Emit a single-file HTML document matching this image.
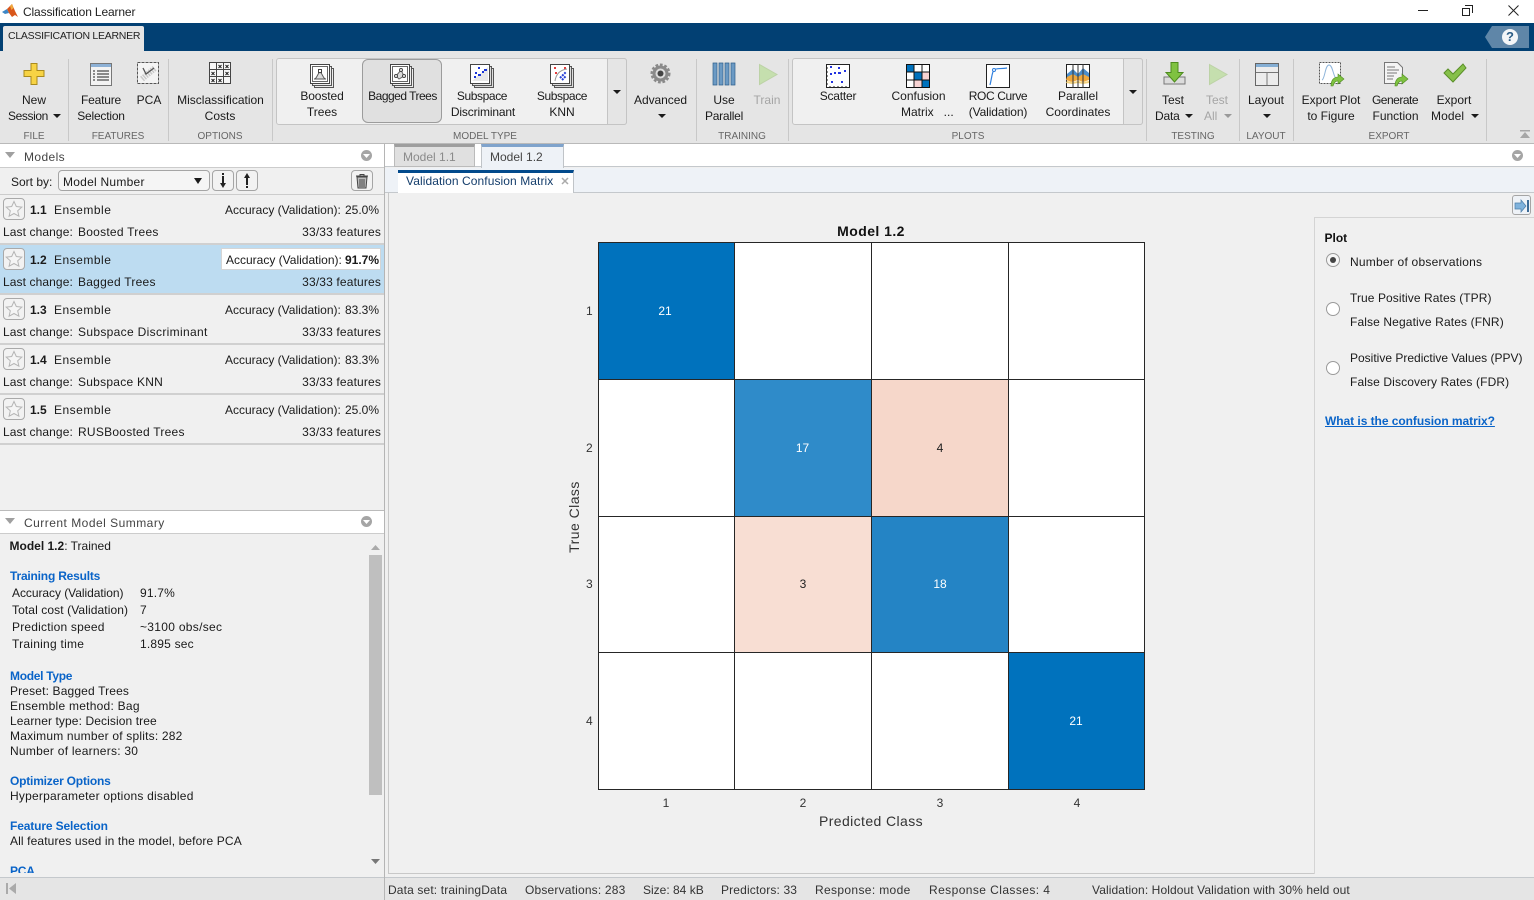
<!DOCTYPE html>
<html><head><meta charset="utf-8"><title>Classification Learner</title>
<style>
html,body{margin:0;padding:0;width:1534px;height:900px;overflow:hidden;background:#f0f0f0;}
body{position:relative;font:12px/14px "Liberation Sans",sans-serif;color:#1a1a1a;}
.b{position:absolute;box-sizing:border-box;}
.t{position:absolute;white-space:nowrap;line-height:14px;}
.c{position:absolute;white-space:nowrap;line-height:14px;transform:translateX(-50%);}
.g{color:#666;font-size:10px;}
.d{color:#a5a5a5;}
.s{letter-spacing:.2px;}
.n{letter-spacing:-.4px;}
svg{position:absolute;overflow:visible;}
.tri{position:absolute;width:0;height:0;border-left:4px solid transparent;border-right:4px solid transparent;border-top:4px solid #1a1a1a;}
.blue{color:#0a64c8;font-weight:bold;letter-spacing:-.2px;}
.sep{position:absolute;top:59px;width:1px;height:82px;background:#c8c8c8;}
.row{position:absolute;left:0;width:384px;height:47px;background:#f0f0f0;}
.star{position:absolute;left:3px;top:3px;width:22px;height:22px;border:1px solid #a9a9a9;border-radius:4px;box-sizing:border-box;background:#f2f2f2;}
.bold{font-weight:bold;}
.cell{position:absolute;box-sizing:border-box;}
</style></head><body>

<!-- title bar -->
<div class="b" style="left:0;top:0;width:1534px;height:23px;background:#fff"></div>
<svg style="left:0;top:0" width="20" height="20" viewBox="0 0 20 20"><path d="M2 12l5-3 2 4-4 1z" fill="#3d86c6"/><path d="M7 9l3-3 2-2 3 7 3 6-3-2-3 2-3-4z" fill="#d9561a"/><path d="M10 6l2-2 1.500 4-2 2z" fill="#f0a83c"/></svg>
<span class="t" style="left:23px;top:5px;color:#222;letter-spacing:-.14px">Classification Learner</span>
<div class="b" style="left:1418px;top:10px;width:10px;height:1px;background:#222"></div>
<div class="b" style="left:1462px;top:8px;width:8px;height:8px;border:1px solid #222;background:#fff"></div>
<div class="b" style="left:1465px;top:5px;width:8px;height:8px;border:1px solid #222;border-left:none;border-bottom:none;"></div>
<svg style="left:1508px;top:5px" width="11" height="11"><path d="M.5.5l10 10M10.5.5l-10 10" stroke="#222" fill="none"/></svg>

<!-- blue band -->
<div class="b" style="left:0;top:23px;width:1534px;height:28px;background:#024073"></div>
<div class="b" style="left:3px;top:26px;width:141px;height:25px;background:#e5e5e5;border-radius:2px 2px 0 0"></div>
<span class="t" style="left:8px;top:29px;color:#1f1f1f;font-size:10.5px;letter-spacing:-.27px">CLASSIFICATION LEARNER</span>
<svg style="left:1485px;top:26px" width="44" height="22"><path d="M7 0H44V22H7L0 11z" fill="#5f86a8"/><circle cx="25" cy="11" r="8" fill="#f4f6f8"/></svg>
<span class="t bold" style="left:1506px;top:30px;color:#2c5d86;font-size:13px">?</span>

<!-- toolstrip -->
<div class="b" style="left:0;top:51px;width:1534px;height:93px;background:#e5e5e5;border-bottom:1px solid #b9b9b9"></div>
<div class="sep" style="left:68px"></div><div class="sep" style="left:168px"></div><div class="sep" style="left:272px"></div>
<div class="sep" style="left:696px"></div><div class="sep" style="left:788px"></div><div class="sep" style="left:1146px"></div>
<div class="sep" style="left:1239px"></div><div class="sep" style="left:1293px"></div><div class="sep" style="left:1486px"></div>

<div class="b" style="left:276px;top:58px;width:351px;height:67px;background:#f0f0f0;border:1px solid #c4c4c4;border-radius:3px"></div>
<div class="b" style="left:607px;top:58px;width:20px;height:67px;background:#e5e5e5;border:1px solid #c4c4c4;border-radius:0 3px 3px 0"></div>
<div class="b" style="left:362px;top:59px;width:80px;height:64px;background:#e0e0e0;border:1px solid #9c9c9c;border-radius:6px"></div>
<div class="b" style="left:792px;top:58px;width:351px;height:67px;background:#f0f0f0;border:1px solid #c4c4c4;border-radius:3px"></div>
<div class="b" style="left:1123px;top:58px;width:20px;height:67px;background:#e5e5e5;border:1px solid #c4c4c4;border-radius:0 3px 3px 0"></div>
<div class="tri" style="left:613px;top:90px"></div>
<div class="tri" style="left:1129px;top:90px"></div>

<!-- New session icon -->
<svg style="left:23px;top:63px" width="22" height="22"><path d="M8 .5h6v7h7v6h-7v8H8v-8H1v-6h7z" fill="#f7d344" stroke="#a98a1d"/></svg>
<span class="c" style="left:34px;top:93px">New</span>
<span class="t n" style="left:8px;top:109px">Session</span><div class="tri" style="left:53px;top:114px"></div>
<span class="c g" style="left:34px;top:130px">FILE</span>

<!-- Feature selection -->
<svg style="left:90px;top:63px" width="22" height="23"><rect x=".5" y=".5" width="21" height="22" fill="#f3f3f3" stroke="#777"/><rect x="1" y="1" width="20" height="3" fill="#8db1d6"/><path d="M3 8h2M7 8h12M3 11h2M7 11h12M3 14h2M7 14h12M3 17h2M7 17h12" stroke="#222"/></svg>
<span class="c" style="left:101px;top:93px;letter-spacing:-.2px">Feature</span><span class="c" style="left:101px;top:109px;letter-spacing:-.2px">Selection</span>
<!-- PCA -->
<svg style="left:137px;top:62px" width="22" height="22"><rect x=".5" y=".5" width="21" height="21" fill="#f4f4f4" stroke="#555" stroke-dasharray="3 1"/><path d="M5 17L18 6" stroke="#c9c9c9" stroke-width="6" stroke-dasharray="1.500 1"/><path d="M6 6l3 6 8-6" stroke="#555" fill="none" stroke-width="1.300"/></svg>
<span class="c" style="left:149px;top:93px">PCA</span>
<span class="c g" style="left:118px;top:130px">FEATURES</span>

<!-- Misclass -->
<svg style="left:209px;top:62px" width="22" height="22"><rect x=".5" y=".5" width="21" height="21" fill="#f7f7f7" stroke="#444"/><path d="M7.500 1v20M14.500 1v20M1 7.500h20M1 14.500h20" stroke="#444"/><path d="M9.500 3l3 3m0-3l-3 3M16.500 3l3 3m0-3l-3 3M2.500 10l3 3m0-3l-3 3M16.500 10l3 3m0-3l-3 3M2.500 17l3 3m0-3l-3 3M9.500 17l3 3m0-3l-3 3" stroke="#222"/></svg>
<span class="c" style="left:220.500px;top:93px">Misclassification</span><span class="c" style="left:220px;top:109px">Costs</span>
<span class="c g" style="left:220px;top:130px">OPTIONS</span>

<!-- model type icons -->
<svg style="left:310px;top:64px" width="24" height="24"><rect x="4.500" y="4.500" width="19" height="19" fill="#eee" stroke="#555"/><rect x="2.500" y="2.500" width="19" height="19" fill="#eee" stroke="#555"/><rect x=".5" y=".5" width="19" height="19" fill="#fff" stroke="#444"/><rect x="2.500" y="2.500" width="15" height="15" fill="#fff" stroke="#666"/><path d="M4 15c3 0 3-5 6-7 3 2 3 7 6 7z" fill="#ddd" stroke="#555"/><rect x="8.500" y="5.500" width="3" height="3" fill="#fff" stroke="#444"/></svg>
<span class="c" style="left:322px;top:89px;letter-spacing:-.1px">Boosted</span><span class="c" style="left:322px;top:105px">Trees</span>
<svg style="left:390px;top:64px" width="24" height="24"><rect x="4.500" y="4.500" width="19" height="19" fill="#eee" stroke="#555"/><rect x="2.500" y="2.500" width="19" height="19" fill="#eee" stroke="#555"/><rect x=".5" y=".5" width="19" height="19" fill="#fff" stroke="#444"/><rect x="2.500" y="2.500" width="15" height="15" fill="#fff" stroke="#666"/><path d="M6 12l5-6 3 6-5 3z" fill="#ddd" stroke="#666"/><circle cx="11" cy="6" r="1.500" fill="#fff" stroke="#444"/><circle cx="6" cy="12" r="1.500" fill="#fff" stroke="#444"/><circle cx="14" cy="12" r="1.500" fill="#fff" stroke="#444"/></svg>
<span class="c" style="left:402.500px;top:89px;letter-spacing:-.5px">Bagged Trees</span>
<svg style="left:470px;top:64px" width="24" height="24"><rect x="4.500" y="4.500" width="19" height="19" fill="#ddd" stroke="#555"/><rect x="2.500" y="2.500" width="19" height="19" fill="#ddd" stroke="#555"/><rect x=".5" y=".5" width="19" height="19" fill="#fff" stroke="#444"/><path d="M2 17L18 3v14z" fill="#e8e8e8"/><path d="M8 4h2M14 6h3M5 9h2M12 8h2M4 13h2M8 11h3" stroke="#1a35d8" stroke-width="2"/></svg>
<span class="c n" style="left:482px;top:89px">Subspace</span><span class="c" style="left:483px;top:105px;letter-spacing:-.15px">Discriminant</span>
<svg style="left:550px;top:64px" width="24" height="24"><rect x="4.500" y="4.500" width="19" height="19" fill="#ddd" stroke="#555"/><rect x="2.500" y="2.500" width="19" height="19" fill="#ddd" stroke="#555"/><rect x=".5" y=".5" width="19" height="19" fill="#fff" stroke="#444"/><path d="M4 4h2M5 9h2M14 4h2" stroke="#e43c3c" stroke-width="2"/><path d="M5 17c1-7 5-11 12-12" stroke="#999" fill="none"/><path d="M10 14l3-3 3-3M12 16l4-4" stroke="#2740d8" stroke-width="2" stroke-dasharray="2 1"/></svg>
<span class="c n" style="left:562px;top:89px">Subspace</span><span class="c" style="left:562px;top:105px">KNN</span>
<span class="c g" style="left:485px;top:130px">MODEL TYPE</span>

<!-- advanced -->
<svg style="left:650px;top:63px" width="21" height="21"><circle cx="10.500" cy="10.500" r="8" fill="#8a8a8a" stroke="#8a8a8a" stroke-width="4" stroke-dasharray="2.500 1.600"/><circle cx="10.500" cy="10.500" r="7.500" fill="#8a8a8a"/><circle cx="10.500" cy="10.500" r="5" fill="#dcdcdc"/><circle cx="10.500" cy="10.500" r="3" fill="#444"/></svg>
<span class="c" style="left:660.500px;top:93px;letter-spacing:-.05px">Advanced</span><div class="tri" style="left:658px;top:114px"></div>

<!-- training -->
<svg style="left:713px;top:63px" width="23" height="23"><path d="M0 0h4v22H0zM6 0h4v22H6zM12 0h4v22h-4zM18 0h4v22h-4z" fill="#6b9ac4" stroke="#2f5f8a" stroke-width=".7"/></svg>
<span class="c" style="left:724px;top:93px">Use</span><span class="c" style="left:724px;top:109px;letter-spacing:-.25px">Parallel</span>
<svg style="left:759px;top:64px" width="19" height="21"><path d="M.5.500L18 10.500.5 20.500z" fill="#c5dfae" stroke="#bcd2a6"/></svg>
<span class="c d" style="left:767px;top:93px">Train</span>
<span class="c g" style="left:742px;top:130px">TRAINING</span>

<!-- plots icons -->
<svg style="left:826px;top:64px" width="24" height="24"><rect x=".5" y=".5" width="23" height="23" fill="#fff" stroke="#222"/><path d="M1 4h1M1 8h1M1 12h1M1 16h1M1 20h1M4 22v1M8 22v1M12 22v1M16 22v1M20 22v1" stroke="#222"/><path d="M4 3h2M12 4h2M8 9h2M12 9h3M18 7h2M4 10h2M5 18h2M15 18h2" stroke="#2233e0" stroke-width="2"/></svg>
<span class="c" style="left:838px;top:89px;letter-spacing:-.2px">Scatter</span>
<svg style="left:906px;top:64px" width="24" height="24"><rect x=".5" y=".5" width="23" height="23" fill="#fff" stroke="#111"/><rect x="1" y="1" width="7" height="7" fill="#0072bd"/><rect x="8" y="8" width="8" height="8" fill="#0072bd"/><rect x="16" y="16" width="7" height="7" fill="#0072bd"/><rect x="16" y="8" width="7" height="8" fill="#f8d3d3"/><rect x="8" y="16" width="8" height="7" fill="#f8d3d3"/><path d="M8 0v24M16 0v24M0 8h24M0 16h24" stroke="#111"/></svg>
<span class="c" style="left:918.500px;top:89px">Confusion</span><span class="t" style="left:901px;top:105px">Matrix&nbsp;&nbsp;&nbsp;...</span>
<svg style="left:986px;top:64px" width="24" height="24"><rect x=".5" y=".5" width="23" height="23" fill="#fff" stroke="#222"/><path d="M4 21c2-8 2-13 4-15s6-1 13-2" fill="none" stroke="#2f7fdd" stroke-width="1.200"/><circle cx="8" cy="6" r="1.500" fill="#fff" stroke="#2f7fdd"/></svg>
<span class="c n" style="left:998px;top:89px">ROC Curve</span><span class="c" style="left:998px;top:105px;letter-spacing:-.1px">(Validation)</span>
<svg style="left:1066px;top:64px" width="24" height="24"><rect x=".5" y=".5" width="23" height="23" fill="#fff" stroke="#222"/><path d="M1 10l6-5 5 5 5-6 6 5v5H1z" fill="#4a8dcb"/><path d="M1 13l6-3 5 3 5-3 6 3v3l-6 2-5-2-6 2-6-2z" fill="#f0a83c"/><path d="M1 17l6 1 5-1 5 1 6-1v2l-6 1-5-1-6 1-6-1z" fill="#f3d27e"/><path d="M7 0v24M12 0v24M17 0v24" stroke="#333"/></svg>
<span class="c" style="left:1078px;top:89px">Parallel</span><span class="c" style="left:1078px;top:105px">Coordinates</span>
<span class="c g" style="left:968px;top:130px">PLOTS</span>

<!-- testing -->
<svg style="left:1163px;top:62px" width="23" height="24"><path d="M1 15h21v7H1z" fill="#dcdcdc" stroke="#777"/><path d="M8 .5h7v10h5L11.500 20 3 10.500h5z" fill="#7fc241" stroke="#4d8b1e"/></svg>
<span class="c" style="left:1173px;top:93px">Test</span><span class="t" style="left:1155px;top:109px;letter-spacing:-.2px">Data</span><div class="tri" style="left:1185px;top:114px"></div>
<svg style="left:1209px;top:64px" width="19" height="21"><path d="M.5.500L18 10.500.5 20.500z" fill="#c5dfae" stroke="#bcd2a6"/></svg>
<span class="c d" style="left:1217px;top:93px">Test</span><span class="t d" style="left:1204px;top:109px">All</span><div class="tri" style="left:1224px;top:114px;border-top-color:#999"></div>
<span class="c g" style="left:1193px;top:130px">TESTING</span>

<!-- layout -->
<svg style="left:1255px;top:63px" width="24" height="23"><rect x=".5" y=".5" width="23" height="22" fill="#ececec" stroke="#666"/><rect x="1" y="1" width="22" height="3" fill="#84aed4"/><path d="M1 9.500h22M12 9.500V22" stroke="#777"/></svg>
<span class="c" style="left:1266px;top:93px">Layout</span><div class="tri" style="left:1263px;top:114px"></div>
<span class="c g" style="left:1266px;top:130px">LAYOUT</span>

<!-- export -->
<svg style="left:1319px;top:62px" width="25" height="24"><rect x=".5" y=".5" width="21" height="21" fill="#fff" stroke="#555" stroke-dasharray="2 1"/><path d="M3 18c3-1 3-15 7-15s4 12 8 15" fill="none" stroke="#8fb5da"/><path d="M12 24c0-6 3-9 7-9v-3l6 5-6 5v-3c-3 0-4 2-5 5z" fill="#7fc241" stroke="#4d8b1e" stroke-width=".6"/></svg>
<span class="c" style="left:1331px;top:93px">Export Plot</span><span class="c" style="left:1331px;top:109px">to Figure</span>
<svg style="left:1384px;top:62px" width="25" height="24"><path d="M.5.500h13l5 5v16H.5z" fill="#f4f4f4" stroke="#777"/><path d="M3 5h8M3 8h12M3 11h10M3 14h7M3 17h6" stroke="#777"/><path d="M11 24c0-6 3-9 7-9v-3l6 5-6 5v-3c-3 0-4 2-5 5z" fill="#7fc241" stroke="#4d8b1e" stroke-width=".6"/></svg>
<span class="c" style="left:1395px;top:93px;letter-spacing:-.5px">Generate</span><span class="c" style="left:1395.500px;top:109px">Function</span>
<svg style="left:1443px;top:63px" width="24" height="20"><path d="M1 10l4-4 5 5L20 1l3 4L10 19z" fill="#86c04a" stroke="#5a8f28"/></svg>
<span class="c" style="left:1454px;top:93px">Export</span><span class="t" style="left:1431px;top:109px;letter-spacing:.1px">Model</span><div class="tri" style="left:1471px;top:114px"></div>
<span class="c g" style="left:1389px;top:130px">EXPORT</span>
<svg style="left:1520px;top:130px" width="10" height="10"><path d="M0 0h10v1.500H0zM5 2l5 6H0z" fill="#a6a6a6"/></svg>

<!-- left panel -->
<div class="b" style="left:0;top:144px;width:385px;height:24px;background:#fff;border-bottom:1px solid #ccc"></div>
<svg style="left:5px;top:152px" width="11" height="7"><path d="M0 0h10L5 6z" fill="#a0a0a0"/></svg>
<span class="t" style="left:24px;top:150px;color:#444;letter-spacing:.4px">Models</span>
<div class="b" style="left:361px;top:150px;width:11px;height:11px;border-radius:50%;background:#a5a5a5"></div>
<svg style="left:363px;top:154px" width="7" height="5"><path d="M0 0h7L3.500 4z" fill="#fff"/></svg>

<div class="b" style="left:0;top:168px;width:384px;height:26px;background:#f0f0f0"></div>
<span class="t" style="left:11px;top:175px">Sort by:</span>
<div class="b" style="left:58px;top:170px;width:152px;height:21px;background:#f5f5f5;border:1px solid #a5a5a5;border-radius:4px"></div>
<span class="t" style="left:63px;top:175px;letter-spacing:.25px">Model Number</span>
<div class="tri" style="left:194px;top:178px;border-left-width:4px;border-right-width:4px;border-top-width:6px"></div>
<div class="b" style="left:212px;top:170px;width:22px;height:21px;border:1px solid #a5a5a5;border-radius:4px;background:#f2f2f2"></div>
<svg style="left:219px;top:173px" width="8" height="15"><path d="M4 3v9" stroke="#222" stroke-width="2"/><path d="M1 10h6l-3 5z" fill="#222"/><rect x="3" y="0" width="2" height="2" fill="#222"/></svg>
<div class="b" style="left:236px;top:170px;width:22px;height:21px;border:1px solid #a5a5a5;border-radius:4px;background:#f2f2f2"></div>
<svg style="left:243px;top:173px" width="8" height="15"><path d="M4 3v9" stroke="#222" stroke-width="2"/><path d="M1 5h6L4 0z" fill="#222"/><rect x="3" y="13" width="2" height="2" fill="#222"/></svg>
<div class="b" style="left:351px;top:170px;width:22px;height:21px;border:1px solid #a5a5a5;border-radius:4px;background:#f2f2f2"></div>
<svg style="left:355px;top:174px" width="14" height="15"><path d="M1 2h12M5 2V.5h4V2" stroke="#444" fill="none"/><path d="M2 3h10l-1 11H3z" fill="#bbb" stroke="#444"/><path d="M5 5v8M7 5v8M9 5v8" stroke="#444"/></svg>

<div class="b" style="left:0;top:194px;width:384px;height:1px;background:#ccc"></div>

<!-- rows -->
<div class="row" style="top:195px"><div class="star"></div><svg style="left:5px;top:5px" width="18" height="18"><path d="M9 1.500l2.300 5 5.500.6-4.100 3.700 1.200 5.400L9 13.500l-4.900 2.700 1.200-5.400L1.200 7.100l5.500-.6z" fill="#f5f5f5" stroke="#b5b5b5"/></svg>
<span class="t bold" style="left:30px;top:8px">1.1</span><span class="t" style="left:54px;top:8px;letter-spacing:.5px">Ensemble</span><span class="t" style="left:225px;top:8px">Accuracy (Validation):</span><span class="t" style="left:345px;top:8px">25.0%</span>
<span class="t" style="left:3px;top:30px;letter-spacing:.1px">Last change:</span><span class="t" style="left:78px;top:30px;letter-spacing:.25px">Boosted Trees</span><span class="t" style="right:3px;top:30px;letter-spacing:.15px">33/33 features</span></div>
<div class="b" style="left:0;top:243px;width:384px;height:2px;background:#d0d0d0"></div>

<div class="row" style="top:245px;background:#bddcf1;height:48px"><div class="star"></div><svg style="left:5px;top:5px" width="18" height="18"><path d="M9 1.500l2.300 5 5.500.6-4.100 3.700 1.200 5.400L9 13.500l-4.900 2.700 1.200-5.400L1.200 7.100l5.500-.6z" fill="#f5f5f5" stroke="#b5b5b5"/></svg>
<div class="b" style="left:221px;top:3px;width:160px;height:22px;background:#fff;border:1px solid #d5d5d5"></div>
<span class="t bold" style="left:30px;top:8px">1.2</span><span class="t" style="left:54px;top:8px;letter-spacing:.5px">Ensemble</span><span class="t" style="left:226px;top:8px">Accuracy (Validation):</span><span class="t bold" style="left:345px;top:8px">91.7%</span>
<span class="t" style="left:3px;top:30px;letter-spacing:.1px">Last change:</span><span class="t" style="left:78px;top:30px;letter-spacing:.25px">Bagged Trees</span><span class="t" style="right:3px;top:30px;letter-spacing:.15px">33/33 features</span></div>
<div class="b" style="left:0;top:293px;width:384px;height:2px;background:#d0d0d0"></div>

<div class="row" style="top:295px"><div class="star"></div><svg style="left:5px;top:5px" width="18" height="18"><path d="M9 1.500l2.300 5 5.500.6-4.100 3.700 1.200 5.400L9 13.500l-4.900 2.700 1.200-5.400L1.200 7.100l5.500-.6z" fill="#f5f5f5" stroke="#b5b5b5"/></svg>
<span class="t bold" style="left:30px;top:8px">1.3</span><span class="t" style="left:54px;top:8px;letter-spacing:.5px">Ensemble</span><span class="t" style="left:225px;top:8px">Accuracy (Validation):</span><span class="t" style="left:345px;top:8px">83.3%</span>
<span class="t" style="left:3px;top:30px;letter-spacing:.1px">Last change:</span><span class="t" style="left:78px;top:30px;letter-spacing:.33px">Subspace Discriminant</span><span class="t" style="right:3px;top:30px;letter-spacing:.15px">33/33 features</span></div>
<div class="b" style="left:0;top:343px;width:384px;height:2px;background:#d0d0d0"></div>

<div class="row" style="top:345px"><div class="star"></div><svg style="left:5px;top:5px" width="18" height="18"><path d="M9 1.500l2.300 5 5.500.6-4.100 3.700 1.200 5.400L9 13.500l-4.900 2.700 1.200-5.400L1.200 7.100l5.500-.6z" fill="#f5f5f5" stroke="#b5b5b5"/></svg>
<span class="t bold" style="left:30px;top:8px">1.4</span><span class="t" style="left:54px;top:8px;letter-spacing:.5px">Ensemble</span><span class="t" style="left:225px;top:8px">Accuracy (Validation):</span><span class="t" style="left:345px;top:8px">83.3%</span>
<span class="t" style="left:3px;top:30px;letter-spacing:.1px">Last change:</span><span class="t" style="left:78px;top:30px;letter-spacing:.25px">Subspace KNN</span><span class="t" style="right:3px;top:30px;letter-spacing:.15px">33/33 features</span></div>
<div class="b" style="left:0;top:393px;width:384px;height:2px;background:#d0d0d0"></div>

<div class="row" style="top:395px"><div class="star"></div><svg style="left:5px;top:5px" width="18" height="18"><path d="M9 1.500l2.300 5 5.500.6-4.100 3.700 1.200 5.400L9 13.500l-4.900 2.700 1.200-5.400L1.200 7.100l5.500-.6z" fill="#f5f5f5" stroke="#b5b5b5"/></svg>
<span class="t bold" style="left:30px;top:8px">1.5</span><span class="t" style="left:54px;top:8px;letter-spacing:.5px">Ensemble</span><span class="t" style="left:225px;top:8px">Accuracy (Validation):</span><span class="t" style="left:345px;top:8px">25.0%</span>
<span class="t" style="left:3px;top:30px;letter-spacing:.1px">Last change:</span><span class="t" style="left:78px;top:30px;letter-spacing:.25px">RUSBoosted Trees</span><span class="t" style="right:3px;top:30px;letter-spacing:.15px">33/33 features</span></div>
<div class="b" style="left:0;top:443px;width:384px;height:2px;background:#d0d0d0"></div>

<!-- summary panel -->
<div class="b" style="left:0;top:510px;width:385px;height:24px;background:#fff;border-top:1px solid #bbb;border-bottom:1px solid #ccc"></div>
<svg style="left:5px;top:518px" width="11" height="7"><path d="M0 0h10L5 6z" fill="#a0a0a0"/></svg>
<span class="t" style="left:24px;top:516px;color:#444;letter-spacing:.48px">Current Model Summary</span>
<div class="b" style="left:361px;top:516px;width:11px;height:11px;border-radius:50%;background:#a5a5a5"></div>
<svg style="left:363px;top:520px" width="7" height="5"><path d="M0 0h7L3.500 4z" fill="#fff"/></svg>

<span class="t" style="left:9.500px;top:539px"><b>Model 1.2</b>: Trained</span>
<span class="t blue" style="left:10px;top:569px">Training Results</span>
<span class="t" style="left:12px;top:586px;letter-spacing:-.05px">Accuracy (Validation)</span><span class="t" style="left:140px;top:586px;letter-spacing:.2px">91.7%</span>
<span class="t" style="left:12px;top:603px;letter-spacing:.1px">Total cost (Validation)</span><span class="t" style="left:140px;top:603px">7</span>
<span class="t s" style="left:12px;top:620px">Prediction speed</span><span class="t" style="left:140px;top:620px;letter-spacing:.3px">~3100 obs/sec</span>
<span class="t" style="left:12px;top:637px;letter-spacing:.25px">Training time</span><span class="t s" style="left:140px;top:637px">1.895 sec</span>
<span class="t blue" style="left:10px;top:669px;letter-spacing:-.3px">Model Type</span>
<span class="t" style="left:10px;top:684px;letter-spacing:.15px">Preset: Bagged Trees</span>
<span class="t" style="left:10px;top:699px;letter-spacing:.25px">Ensemble method: Bag</span>
<span class="t" style="left:10px;top:714px;letter-spacing:.1px">Learner type: Decision tree</span>
<span class="t s" style="left:10px;top:729px">Maximum number of splits: 282</span>
<span class="t" style="left:10px;top:744px;letter-spacing:.25px">Number of learners: 30</span>
<span class="t blue" style="left:10px;top:774px">Optimizer Options</span>
<span class="t" style="left:10px;top:789px;letter-spacing:.22px">Hyperparameter options disabled</span>
<span class="t blue" style="left:10px;top:819px;letter-spacing:-.13px">Feature Selection</span>
<span class="t" style="left:10px;top:834px;letter-spacing:.12px">All features used in the model, before PCA</span>
<div class="b" style="left:0;top:864px;width:368px;height:9px;overflow:hidden"><span class="t blue" style="left:10px;top:0;">PCA</span></div>
<svg style="left:371px;top:545px" width="9" height="5"><path d="M0 5h9L4.500 0z" fill="#aaa"/></svg>
<div class="b" style="left:369px;top:555px;width:13px;height:240px;background:#bfbfbf"></div>
<svg style="left:371px;top:859px" width="9" height="5"><path d="M0 0h9L4.500 5z" fill="#777"/></svg>

<!-- status -->
<div class="b" style="left:0;top:877px;width:1534px;height:23px;background:#e5e5e5;border-top:1px solid #c4c8cc"></div>
<div class="b" style="left:6px;top:883px;width:2px;height:11px;background:#aaa"></div>
<svg style="left:9px;top:883px" width="7" height="11"><path d="M7 0v11L0 5.500z" fill="#aaa"/></svg>
<span class="t" style="left:388px;top:883px;color:#333;letter-spacing:.14px">Data set: trainingData</span>
<span class="t" style="left:525px;top:883px;color:#333;letter-spacing:.18px">Observations: 283</span>
<span class="t" style="left:643px;top:883px;color:#333">Size: 84 kB</span>
<span class="t" style="left:721px;top:883px;color:#333;letter-spacing:.15px">Predictors: 33</span>
<span class="t" style="left:815px;top:883px;color:#333;letter-spacing:.35px">Response: mode</span>
<span class="t" style="left:929px;top:883px;color:#333;letter-spacing:.42px">Response Classes: 4</span>
<span class="t" style="left:1092px;top:883px;color:#333;letter-spacing:.1px">Validation: Holdout Validation with 30% held out</span>

<!-- vertical divider -->
<div class="b" style="left:384px;top:144px;width:1px;height:756px;background:#b5b5b5"></div>

<!-- tabs -->
<div class="b" style="left:385px;top:144px;width:1149px;height:23px;background:#fff;border-bottom:1px solid #c4c8cc"></div>
<div class="b" style="left:394px;top:144px;width:81px;height:23px;background:#e0e0e0;border:1px solid #bbb;border-top:3px solid #9e9e9e"></div>
<span class="t" style="left:403px;top:150px;color:#8a8a8a">Model 1.1</span>
<div class="b" style="left:481px;top:144px;width:83px;height:24px;background:#eef2f7;border-right:1px solid #c0c4c8;border-left:1px solid #c0c4c8;border-top:3px solid #7fa3cc"></div>
<span class="t" style="left:490px;top:150px;color:#444">Model 1.2</span>
<div class="b" style="left:1512px;top:150px;width:11px;height:11px;border-radius:50%;background:#a5a5a5"></div>
<svg style="left:1514px;top:154px" width="7" height="5"><path d="M0 0h7L3.500 4z" fill="#fff"/></svg>

<div class="b" style="left:385px;top:168px;width:1149px;height:25px;background:#eef2f7;border-bottom:1px solid #c4c8cc"></div>
<div class="b" style="left:398px;top:170px;width:176px;height:23px;background:#fff;border-top:3px solid #024a8c;border-right:1px solid #c0c4c8"></div>
<span class="t" style="left:406px;top:174px;color:#143d6b;letter-spacing:.08px">Validation Confusion Matrix</span>
<svg style="left:561px;top:177px" width="8" height="8"><path d="M1 1l6 6M7 1L1 7" stroke="#aaa" stroke-width="1.500"/></svg>

<!-- plot area -->
<div class="b" style="left:388px;top:193px;width:1146px;height:681px;background:#f0f0f0;border-left:1px solid #c8c8c8;border-bottom:1px solid #c8c8c8"></div>
<div class="b" style="left:1314px;top:217px;width:220px;height:657px;border-left:1px solid #d4d4d4;border-top:1px solid #d4d4d4;background:#f0f0f0"></div>
<div class="b" style="left:1512px;top:195px;width:19px;height:20px;background:#eef2f7;border:1px solid #a5a5a5;border-radius:3px"></div>
<svg style="left:1515px;top:200px" width="14" height="12"><path d="M0 3h6V0l5 6-5 6V9H0z" fill="#7fb2dc" stroke="#4b7ca8" stroke-width=".7"/><path d="M13 0v12" stroke="#3b6a96" stroke-width="2"/></svg>

<!-- matrix -->
<div class="cell" style="left:598px;top:242px;width:547px;height:548px;background:#fff;border:1px solid #262626"></div>
<div class="cell" style="left:599px;top:243px;width:135px;height:136px;background:#0072bd"></div>
<div class="cell" style="left:735px;top:380px;width:136px;height:136px;background:#2f8bc9"></div>
<div class="cell" style="left:872px;top:380px;width:136px;height:136px;background:#f6d7ca"></div>
<div class="cell" style="left:735px;top:517px;width:136px;height:135px;background:#f8ded3"></div>
<div class="cell" style="left:872px;top:517px;width:136px;height:135px;background:#2484c5"></div>
<div class="cell" style="left:1009px;top:653px;width:135px;height:136px;background:#0072bd"></div>
<div class="cell" style="left:734px;top:243px;width:1px;height:546px;background:#262626"></div>
<div class="cell" style="left:871px;top:243px;width:1px;height:546px;background:#262626"></div>
<div class="cell" style="left:1008px;top:243px;width:1px;height:546px;background:#262626"></div>
<div class="cell" style="left:599px;top:379px;width:545px;height:1px;background:#262626"></div>
<div class="cell" style="left:599px;top:516px;width:545px;height:1px;background:#262626"></div>
<div class="cell" style="left:599px;top:652px;width:545px;height:1px;background:#262626"></div>

<span class="c" style="left:665px;top:304px;color:#fff">21</span>
<span class="c" style="left:802.500px;top:441px;color:#fff">17</span>
<span class="c" style="left:940px;top:441px;color:#222">4</span>
<span class="c" style="left:803px;top:577px;color:#222">3</span>
<span class="c" style="left:940px;top:577px;color:#fff">18</span>
<span class="c" style="left:1076px;top:714px;color:#fff">21</span>

<span class="c bold" style="left:871px;top:223px;font-size:14px;line-height:16px;color:#111;letter-spacing:.45px">Model 1.2</span>
<span class="t" style="left:586px;top:304px;color:#333">1</span>
<span class="t" style="left:586px;top:441px;color:#333">2</span>
<span class="t" style="left:586px;top:577px;color:#333">3</span>
<span class="t" style="left:586px;top:714px;color:#333">4</span>
<span class="c" style="left:666px;top:796px;color:#333">1</span>
<span class="c" style="left:803px;top:796px;color:#333">2</span>
<span class="c" style="left:940px;top:796px;color:#333">3</span>
<span class="c" style="left:1077px;top:796px;color:#333">4</span>
<span class="c" style="left:871px;top:813px;font-size:14px;line-height:16px;color:#333;letter-spacing:.4px">Predicted Class</span>
<span class="t" style="left:574px;top:517px;font-size:14px;line-height:16px;color:#333;letter-spacing:.45px;transform:translate(-50%,-50%) rotate(-90deg)">True Class</span>

<!-- right options -->
<span class="t bold" style="left:1324.500px;top:231px;color:#111">Plot</span>
<div class="b" style="left:1326px;top:253px;width:14px;height:14px;border:1px solid #9a9a9a;border-radius:50%;background:#f6f6f6"></div>
<div class="b" style="left:1330px;top:257px;width:6px;height:6px;border-radius:50%;background:#444"></div>
<span class="t" style="left:1350px;top:255px;letter-spacing:.22px">Number of observations</span>
<div class="b" style="left:1326px;top:302px;width:14px;height:14px;border:1px solid #9a9a9a;border-radius:50%;background:#fff"></div>
<span class="t" style="left:1350px;top:291px;letter-spacing:.08px">True Positive Rates (TPR)</span>
<span class="t" style="left:1350px;top:315px;letter-spacing:.12px">False Negative Rates (FNR)</span>
<div class="b" style="left:1326px;top:361px;width:14px;height:14px;border:1px solid #9a9a9a;border-radius:50%;background:#fff"></div>
<span class="t" style="left:1350px;top:351px">Positive Predictive Values (PPV)</span>
<span class="t" style="left:1350px;top:375px;letter-spacing:.12px">False Discovery Rates (FDR)</span>
<span class="t bold" style="left:1325px;top:414px;color:#0a64c8;letter-spacing:-.05px;text-decoration:underline">What is the confusion matrix?</span>

</body></html>
